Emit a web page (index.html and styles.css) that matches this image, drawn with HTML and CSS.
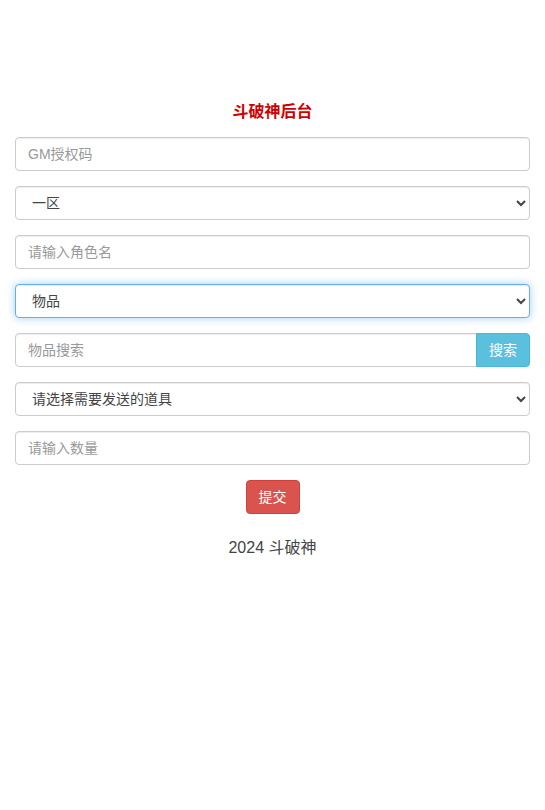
FILE: index.html
```html
<!DOCTYPE html>
<html lang="zh-CN">
<head>
    <meta charset="utf-8" />
    <meta name="viewport" content="width=device-width, initial-scale=1.0">
    <title>斗破神后台</title>
    <link rel="stylesheet" href="styles.css">
</head>
<body>
    <div class="container">
        <h3 class="title">斗破神后台</h3>
        <form id="gmForm" onsubmit="return false;">
            <div class="form-group">
                <input type="text" class="form-control" id="code" placeholder="GM授权码" />
            </div>
            <div class="form-group">
                <select class="form-control" id="server">
                    <option value="1">一区</option>
                </select>
            </div>
            <div class="form-group">
                <input type="text" class="form-control" id="role" placeholder="请输入角色名" />
            </div>
            <div class="form-group">
                <select class="form-control focus" id="type">
                    <option value="item">物品</option>
                </select>
            </div>
            <div class="form-group input-group">
                <input type="text" class="form-control" id="keyword" placeholder="物品搜索" />
                <button type="button" class="btn btn-info">搜索</button>
            </div>
            <div class="form-group">
                <select class="form-control" id="item">
                    <option value="">请选择需要发送的道具</option>
                </select>
            </div>
            <div class="form-group">
                <input type="text" class="form-control" id="num" placeholder="请输入数量" />
            </div>
            <div class="actions">
                <button type="submit" class="btn btn-danger">提交</button>
            </div>
        </form>
        <p class="footer">2024 斗破神</p>
    </div>
</body>
</html>
```

FILE: styles.css
```css
body {
    margin: 0;
    font-family: "Liberation Sans", "Noto Sans CJK SC", sans-serif;
    font-size: 14px;
    color: #333;
    background: #fff;
}
.container {
    padding: 0 15px;
}
.title {
    margin: 101px 0 14px;
    font-size: 16px;
    line-height: 22px;
    font-weight: bold;
    color: #d00000;
    text-align: center;
}
.form-group {
    margin-bottom: 15px;
}
.form-control {
    display: block;
    box-sizing: border-box;
    width: 100%;
    height: 34px;
    padding: 6px 12px;
    font-family: inherit;
    font-size: 14px;
    line-height: 20px;
    color: #444;
    background: #fff;
    border: 1px solid #ccc;
    border-radius: 4px;
    box-shadow: inset 0 1px 1px rgba(0, 0, 0, .075);
    outline: none;
}
.form-control::placeholder {
    color: #999;
}
.form-control.focus {
    border-color: #66afe9;
    box-shadow: inset 0 1px 1px rgba(0, 0, 0, .075), 0 0 8px rgba(102, 175, 233, .6);
}
.input-group {
    display: flex;
}
.input-group .form-control {
    flex: 1;
    border-radius: 4px 0 0 4px;
}
.btn {
    height: 34px;
    padding: 6px 12px;
    font-family: inherit;
    font-size: 14px;
    line-height: 20px;
    color: #fff;
    border: 1px solid transparent;
    border-radius: 4px;
    cursor: pointer;
}
.btn-info {
    background: #5bc0de;
    border-color: #46b8da;
    border-radius: 0 4px 4px 0;
    margin-left: -1px;
}
.btn-danger {
    background: #d9534f;
    border-color: #d43f3a;
}
.actions {
    text-align: center;
}
.footer {
    margin: 23px 0 0;
    font-size: 16px;
    line-height: 22px;
    color: #444;
    text-align: center;
}
```
